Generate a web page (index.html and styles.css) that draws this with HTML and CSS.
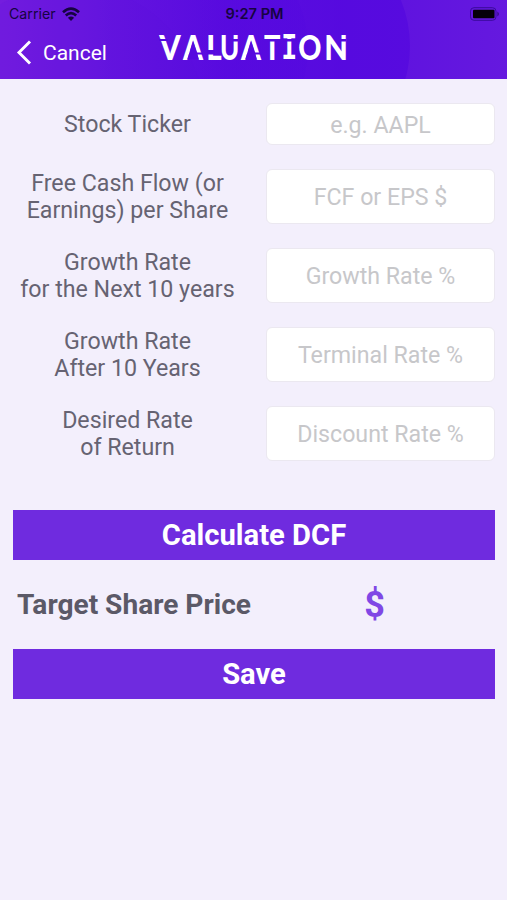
FILE: index.html
```html
<!DOCTYPE html>
<html lang="en">
<head>
<meta charset="utf-8">
<title>Valuation</title>
<link rel="stylesheet" href="styles.css">
</head>
<body>
<header class="header">
  <svg class="rings" viewBox="0 0 507 79" aria-hidden="true"><defs><linearGradient id="g"><stop offset=".1" stop-color="#5307df" stop-opacity="0"/><stop offset=".7" stop-color="#5307df" stop-opacity=".7"/></linearGradient></defs><circle cx="290" cy="46" r="120" fill="url(#g)"/><circle cx="190" cy="48" r="118" fill="url(#g)" opacity=".5"/><circle cx="70" cy="120" r="135" fill="#5d0ddd" opacity=".12"/></svg>
  <div class="status">
    <div class="carrier"><span>Carrier</span>
      <svg width="18" height="14" viewBox="0 0 18 14"><g fill="none" stroke="#160442" stroke-width="2.7"><path d="M1 5.2Q9-1.8 17 5.2"/><path d="M3.8 8.4Q9 3.7 14.2 8.4"/></g><path d="M9 14L5.9 10.8Q9 8 12.1 10.8Z" fill="#160442"/></svg>
    </div>
    <span class="clock">9:27 PM</span>
    <svg class="battery" width="31" height="14" viewBox="0 0 31 14"><rect x="1.5" y=".7" width="25.5" height="12.6" rx="3.5" fill="none" stroke="#3a0b9b"/><rect x="4" y="2.7" width="21.5" height="8.6" rx="1" fill="#050009"/><path d="M28.5 4.5Q31 7 28.5 9.5Z" fill="#2a0875"/></svg>
  </div>
  <div class="nav">
    <div class="back"><svg width="16" height="25" viewBox="0 0 16 25"><path d="M14 1.5L3 12.5L14 23.5" fill="none" stroke="#fff" stroke-width="2.9"/></svg><span>Cancel</span></div>
    <h1 class="title"><span class="l v"><b>V</b></span><span class="l a"><b>A</b></span><span class="l el"><b>L</b></span><span class="l u"><b>U</b></span><span class="l a"><b>A</b></span><span class="l t"><b>T</b></span><span class="l i"><b>I</b></span><span class="l o"><b>O</b></span><span class="l n"><b>N</b></span></h1>
  </div>
</header>
<main class="form">
  <div class="row short"><label for="f1">Stock Ticker</label><input id="f1" placeholder="e.g. AAPL"></div>
  <div class="row"><label for="f2">Free Cash Flow (or<br>Earnings) per Share</label><input id="f2" placeholder="FCF or EPS $"></div>
  <div class="row"><label for="f3">Growth Rate<br>for the Next 10 years</label><input id="f3" placeholder="Growth Rate %"></div>
  <div class="row"><label for="f4">Growth Rate<br>After 10 Years</label><input id="f4" placeholder="Terminal Rate %"></div>
  <div class="row"><label for="f5">Desired Rate<br>of Return</label><input id="f5" placeholder="Discount Rate %"></div>
  <button class="btn calc">Calculate DCF</button>
  <div class="result"><span class="name">Target Share Price</span><span class="price">$</span></div>
  <button class="btn">Save</button>
</main>
</body>
</html>
```
FILE: styles.css
```css
* { box-sizing: border-box; }
body { margin: 0; min-height: 900px; background: #f3effc; font-family: Roboto, sans-serif; color: #666372; }
.header { position: relative; height: 79px; background: linear-gradient(90deg, #741dde 0, #6515df 22%, #5b0ddf 45%, #5f12df 75%, #6519df 100%); overflow: hidden; }
.rings { position: absolute; inset: 0; width: 507px; height: 79px; }
.status { position: relative; display: grid; grid-template-columns: 1fr auto 1fr; align-items: center; height: 27px; padding: 0 7px 0 9px; color: #160442; font: 14.2px Inter, sans-serif; }
.carrier { display: flex; align-items: center; gap: 6px; }
.clock { font-size: 14.6px; font-weight: 600; }
.battery { justify-self: end; }
.nav { position: relative; display: flex; height: 52px; }
.back { display: flex; align-items: center; gap: 11px; width: 159px; height: 51px; padding-left: 16px; color: #fff; font-size: 21px; }

/* Stencil lettering: each letter sits in its own cell, ::after cuts the gaps */
.title { --cut: #560adf; display: flex; margin: 7px 0 0; height: 25px; color: #fff; font: 700 34px/25px Lato, sans-serif; }
.l { position: relative; display: flex; justify-content: center; flex: none; height: 25px; }
.l b { display: block; flex: none; transform: scaleX(.87); }
.l::after { content: ""; position: absolute; inset: 0; background: var(--cut); }
.v { width: 21px; }
.v b { transform: scaleX(.9); }
.v::after { clip-path: polygon(0 5px, 9px 5px, 9px 7px, 0 7px); }
.a { width: 20px; margin-left: 3px; }
.a b { transform: scaleX(.84); }
.a::after { clip-path: polygon(10px 7px, 14.2px 18.5px, 20px 18.5px, 20px 20.5px, 14.5px 20.5px, 16px 26px, 4px 26px); }
.el { width: 13px; margin-left: 4px; }
.el::after { clip-path: polygon(-1px 16px, 8px 16px, 8px 20.5px, -1px 20.5px); }
.u { width: 16px; margin-left: 2px; }
.u b { transform: scaleX(.76); }
.u::after { clip-path: polygon(10px 5px, 17px 5px, 17px 7.5px, 10px 7.5px); }
.t { width: 17px; margin-left: 3px; }
.t b { transform: scaleX(.8); }
.t::after { clip-path: polygon(0 5px, 18px 5px, 18px 7.5px, 0 7.5px); }
.i { width: 14px; margin-left: 1px; }
.i b { font-family: "DejaVu Sans Mono", monospace; transform: translateY(1px) scaleX(.78); }
.i::after { clip-path: polygon(0 5px, 14px 5px, 14px 7.5px, 0 7.5px); }
.o { width: 22px; margin-left: 3px; }
.o b { transform: scaleX(.84); }
.o::after { content: none; }
.n { width: 20px; margin-left: 5px; }
.n b { transform: scaleX(.9); }
.n::after { clip-path: polygon(14px 5px, 21px 5px, 21px 7.5px, 14px 7.5px); }

.form { padding: 24px 12px 0 13px; }
.row { display: grid; grid-template-columns: 229px 229px; justify-content: space-between; align-items: center; height: 55px; margin-bottom: 24px; }
.row.short { height: 42px; }
.row label { padding-top: 1px; text-align: center; font-size: 23.2px; line-height: 27px; }
.row input { width: 229px; height: 100%; padding: 0; border: 1px solid #ebe8f0; border-radius: 6px; background: #fff; text-align: center; font: 23.2px Roboto, sans-serif; }
.row.short input { padding-top: 1px; }
.row input::placeholder { color: #c7c7ca; opacity: 1; }
.btn { display: block; width: 482px; height: 50px; padding: 0; border: 0; background: #6f2bdf; color: #fff; font: 700 29.2px Roboto, sans-serif; }
.calc { margin-top: 49px; }
.result { display: grid; grid-template-columns: 241px 241px; align-items: center; height: 89px; }
.name { padding-left: 4px; font-size: 28.1px; font-weight: 700; color: #5b5967; }
.price { text-align: center; font-size: 36px; font-weight: 700; color: #8047e5; }
```
